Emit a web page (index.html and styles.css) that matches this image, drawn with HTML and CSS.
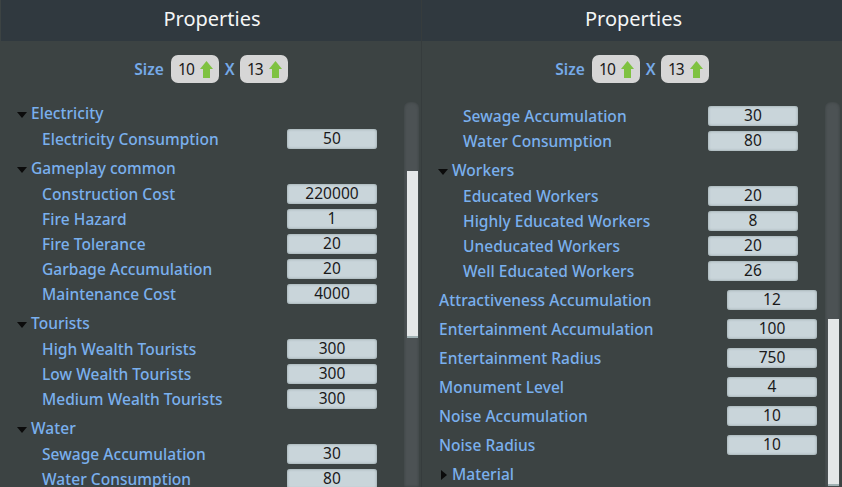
FILE: index.html
```html
<!DOCTYPE html>
<html lang="en">
  <head>
    <meta charset="UTF-8" />
    <meta name="viewport" content="width=device-width, initial-scale=1.0" />
    <title>Properties</title>
    <link rel="stylesheet" href="styles.css">
  </head>
  <body>
    <div class="panel panel-left">
      <h1 class="panel-title">Properties</h1>
      <div class="size-row">
        <span class="size-label">Size</span>
        <span class="size-pill">10 <svg class="arrow-up" viewBox="0 0 13 17"><path d="M6.5 0 L13 8 L10 8 L10 17 L3 17 L3 8 L0 8 Z" /></svg></span>
        <span class="size-x">X</span>
        <span class="size-pill">13 <svg class="arrow-up" viewBox="0 0 13 17"><path d="M6.5 0 L13 8 L10 8 L10 17 L3 17 L3 8 L0 8 Z" /></svg></span>
      </div>
      <div class="panel-body">
        <div class="prop-list">
          <div class="group-row first-group"><span class="tri-down"></span><span class="group-name">Electricity</span></div>
          <div class="prop-row"><span class="prop-name">Electricity Consumption</span><span class="prop-value">50</span></div>
          <div class="group-row"><span class="tri-down"></span><span class="group-name">Gameplay common</span></div>
          <div class="prop-row"><span class="prop-name">Construction Cost</span><span class="prop-value">220000</span></div>
          <div class="prop-row"><span class="prop-name">Fire Hazard</span><span class="prop-value">1</span></div>
          <div class="prop-row"><span class="prop-name">Fire Tolerance</span><span class="prop-value">20</span></div>
          <div class="prop-row"><span class="prop-name">Garbage Accumulation</span><span class="prop-value">20</span></div>
          <div class="prop-row"><span class="prop-name">Maintenance Cost</span><span class="prop-value">4000</span></div>
          <div class="group-row"><span class="tri-down"></span><span class="group-name">Tourists</span></div>
          <div class="prop-row"><span class="prop-name">High Wealth Tourists</span><span class="prop-value">300</span></div>
          <div class="prop-row"><span class="prop-name">Low Wealth Tourists</span><span class="prop-value">300</span></div>
          <div class="prop-row"><span class="prop-name">Medium Wealth Tourists</span><span class="prop-value">300</span></div>
          <div class="group-row"><span class="tri-down"></span><span class="group-name">Water</span></div>
          <div class="prop-row"><span class="prop-name">Sewage Accumulation</span><span class="prop-value">30</span></div>
          <div class="prop-row"><span class="prop-name">Water Consumption</span><span class="prop-value">80</span></div>
        </div>
        <div class="scroll-track"><div class="scroll-thumb thumb-left"></div></div>
      </div>
    </div>

    <div class="panel panel-right">
      <h1 class="panel-title">Properties</h1>
      <div class="size-row">
        <span class="size-label">Size</span>
        <span class="size-pill">10 <svg class="arrow-up" viewBox="0 0 13 17"><path d="M6.5 0 L13 8 L10 8 L10 17 L3 17 L3 8 L0 8 Z" /></svg></span>
        <span class="size-x">X</span>
        <span class="size-pill">13 <svg class="arrow-up" viewBox="0 0 13 17"><path d="M6.5 0 L13 8 L10 8 L10 17 L3 17 L3 8 L0 8 Z" /></svg></span>
      </div>
      <div class="panel-body">
        <div class="prop-list scrolled">
          <div class="prop-row"><span class="prop-name">Sewage Accumulation</span><span class="prop-value">30</span></div>
          <div class="prop-row"><span class="prop-name">Water Consumption</span><span class="prop-value">80</span></div>
          <div class="group-row"><span class="tri-down"></span><span class="group-name">Workers</span></div>
          <div class="prop-row"><span class="prop-name">Educated Workers</span><span class="prop-value">20</span></div>
          <div class="prop-row"><span class="prop-name">Highly Educated Workers</span><span class="prop-value">8</span></div>
          <div class="prop-row"><span class="prop-name">Uneducated Workers</span><span class="prop-value">20</span></div>
          <div class="prop-row"><span class="prop-name">Well Educated Workers</span><span class="prop-value">26</span></div>
          <div class="top-row first-top"><span class="prop-name">Attractiveness Accumulation</span><span class="prop-value">12</span></div>
          <div class="top-row"><span class="prop-name">Entertainment Accumulation</span><span class="prop-value">100</span></div>
          <div class="top-row"><span class="prop-name">Entertainment Radius</span><span class="prop-value">750</span></div>
          <div class="top-row"><span class="prop-name">Monument Level</span><span class="prop-value">4</span></div>
          <div class="top-row"><span class="prop-name">Noise Accumulation</span><span class="prop-value">10</span></div>
          <div class="top-row"><span class="prop-name">Noise Radius</span><span class="prop-value">10</span></div>
          <div class="group-row closed-group"><span class="tri-right"></span><span class="group-name">Material</span></div>
        </div>
        <div class="scroll-track"><div class="scroll-thumb thumb-right"></div></div>
      </div>
    </div>
  </body>
</html>
```

FILE: styles.css
```css
html, body {
  height: 100%;
}
body {
  margin: 0;
  display: flex;
  height: 487px;
  overflow: hidden;
  background: #3c4343;
  font-family: "Noto Sans", "Open Sans", sans-serif;
}
.panel {
  display: flex;
  flex-direction: column;
  height: 487px;
  overflow: hidden;
  background: #3c4343;
}
.panel-left {
  width: 420px;
  margin-left: 1px;
}
.panel-right {
  width: 421px;
  border-left: 1px solid #363c3d;
  box-sizing: border-box;
}
.panel-title {
  margin: 0;
  height: 41px;
  line-height: 38px;
  text-align: center;
  font-size: 20px;
  font-weight: 400;
  color: #f4f6f6;
  background: #30393f;
}
.panel-left .panel-title {
  padding-left: 2px;
}
.panel-right .panel-title {
  padding-left: 3px;
}
.size-row {
  display: flex;
  align-items: center;
  justify-content: center;
  height: 28px;
  margin-top: 14px;
  font-weight: 600;
  font-size: 15.5px;
  color: #76aae8;
}
.size-label {
  margin-right: 7px;
}
.size-x {
  margin: 0 5px 0 6px;
}
.size-pill {
  display: flex;
  align-items: center;
  justify-content: flex-end;
  gap: 6px;
  box-sizing: border-box;
  width: 48px;
  height: 28px;
  padding-right: 6px;
  border-radius: 7px;
  background: #d6d6d6;
  color: #1a1a1a;
  font-weight: 400;
  font-size: 15.5px;
  letter-spacing: -1px;
}
.arrow-up {
  width: 13px;
  height: 17px;
  fill: #7fc241;
}
.panel-body {
  flex: 1;
  display: flex;
  min-height: 0;
  margin-top: 19px;
}
.prop-list {
  flex: 1;
  min-width: 0;
  font-size: 15.5px;
  font-weight: 500;
  letter-spacing: 0.04px;
  color: #7ab0ee;
  margin-top: -2px;
}
.scrolled {
  margin-top: 1px;
}
.group-row {
  display: flex;
  align-items: center;
  height: 26px;
  margin-top: 4px;
  padding: 0 0 1px 16px;
  box-sizing: border-box;
}
.first-group {
  margin-top: 0;
}
.group-row .group-name {
  margin-left: 4px;
}
.closed-group {
  margin-top: 2px;
  padding-left: 19px;
}
.closed-group .group-name {
  margin-left: 5px;
}
.tri-down {
  width: 0;
  height: 0;
  margin-top: 5px;
  border-left: 5px solid transparent;
  border-right: 5px solid transparent;
  border-top: 6px solid #0b0b0b;
}
.tri-right {
  width: 0;
  height: 0;
  margin-top: 2px;
  border-top: 5px solid transparent;
  border-bottom: 5px solid transparent;
  border-left: 6px solid #0b0b0b;
}
.prop-row, .top-row {
  display: flex;
  align-items: center;
  justify-content: space-between;
}
.prop-row {
  height: 25px;
  padding: 0 27px 0 41px;
}
.top-row {
  height: 29px;
  padding: 0 8px 0 17px;
}
.first-top {
  margin-top: 2px;
}
.prop-name {
  white-space: nowrap;
}
.prop-value {
  box-sizing: border-box;
  width: 90px;
  height: 20px;
  line-height: 19px;
  text-align: center;
  border-radius: 3px;
  background: #c9d5da;
  box-shadow: inset 0 0 3px #8b999c;
  color: #1a1a1a;
  font-size: 15.5px;
  font-weight: 400;
}
.scroll-track {
  position: relative;
  flex: none;
  width: 15px;
  margin-right: 2px;
  border-radius: 6px 6px 0 0;
  background: #4c5254;
  box-shadow: inset 0 0 3px #383e3f;
}
.scroll-thumb {
  position: absolute;
  left: 3px;
  width: 11px;
  background: #e4e7e8;
  border-bottom: 2px solid #9fb0b2;
}
.thumb-left {
  top: 69px;
  height: 165px;
}
.thumb-right {
  top: 217px;
  height: 165px;
}
```
